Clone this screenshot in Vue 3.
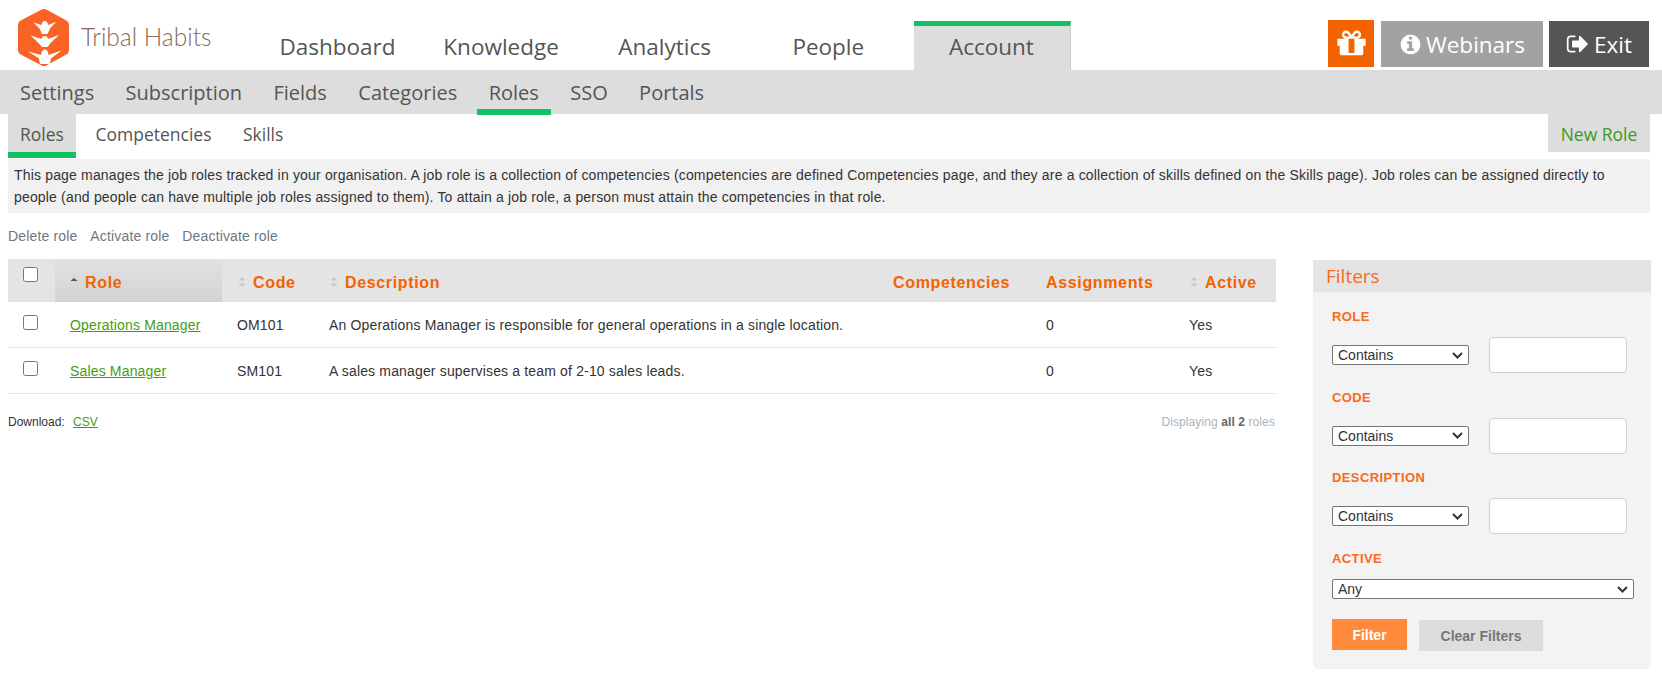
<script setup>
const topTabs = ['Dashboard', 'Knowledge', 'Analytics', 'People', 'Account']
const subTabs = ['Settings', 'Subscription', 'Fields', 'Categories', 'Roles', 'SSO', 'Portals']
const rows = [
  { role: 'Operations Manager', code: 'OM101', desc: 'An Operations Manager is responsible for general operations in a single location.' },
  { role: 'Sales Manager', code: 'SM101', desc: 'A sales manager supervises a team of 2-10 sales leads.' }
]
const filters = ['ROLE', 'CODE', 'DESCRIPTION']
</script>

<template>
  <div class="page">
    <header class="top">
      <div class="logo">
        <svg width="56" height="60" viewBox="0 0 56 60">
          <path d="M27 6 L47 17 L47 42 L27 53 L6 42 L6 17 Z" fill="#f96426" stroke="#f96426" stroke-width="10" stroke-linejoin="round"/>
          <g fill="#fff">
            <path d="M11 43.5 L24 47 Q24.5 41.5 27.7 41.5 Q31 41.5 31.5 47 L44.5 42.5 L34 50.5 L33 56 L23 56 L22 50.5 Z"/>
            <path d="M13.5 27.5 L24.5 31 Q25 28 27.7 28 Q30.5 28 31 31 L42 27 L34 34.5 L30.5 39 L25 39 L21 34.5 Z"/>
            <path d="M16.5 14.5 L24.5 17 Q25 13 27.7 13 Q30.5 13 31 17 L39 14 L33 20.5 L30.5 26 L25 26 L22.5 20.5 Z"/>
          </g>
        </svg>
        <span class="logo-text">Tribal Habits</span>
      </div>
      <nav class="top-nav">
        <a v-for="t in topTabs" :key="t" class="top-tab" :class="{ active: t === 'Account' }">{{ t }}</a>
      </nav>
      <div class="top-btns">
        <a class="gift">
          <svg width="33" height="33" viewBox="0 0 1792 1792"><path fill="#fff" d="M1056 1356v-716h-320v716q0 25 18 38.5t46 13.5h192q28 0 46-13.5t18-38.5zm-456-844h195l-126-161q-26-31-69-31-40 0-68 28t-28 68 28 68 68 28zm688-96q0-40-28-68t-68-28q-43 0-69 31l-125 161h194q40 0 68-28t28-68zm376 256v320q0 14-9 23t-23 9h-96v416q0 40-28 68t-68 28h-1088q-40 0-68-28t-28-68v-416h-96q-14 0-23-9t-9-23v-320q0-14 9-23t23-9h440q-93 0-158.5-65.5t-65.5-158.5 65.5-158.5 158.5-65.5q107 0 168 77l128 165 128-165q61-77 168-77 93 0 158.5 65.5t65.5 158.5-65.5 158.5-158.5 65.5h440q14 0 23 9t9 23z"/></svg>
        </a>
        <a class="btn webinars">
          <svg width="23" height="23" viewBox="0 0 1792 1792"><path fill="#fff" d="M1152 1376v-160q0-14-9-23t-23-9h-96v-512q0-14-9-23t-23-9h-320q-14 0-23 9t-9 23v160q0 14 9 23t23 9h96v320h-96q-14 0-23 9t-9 23v160q0 14 9 23t23 9h448q14 0 23-9t9-23zm-128-896v-160q0-14-9-23t-23-9h-192q-14 0-23 9t-9 23v160q0 14 9 23t23 9h192q14 0 23-9t9-23zm640 416q0 209-103 385.5t-279.5 279.5-385.5 103-385.5-103-279.5-279.5-103-385.5 103-385.5 279.5-279.5 385.5-103 385.5 103 279.5 279.5 103 385.5z"/></svg>
          Webinars
        </a>
        <a class="btn exit">
          <svg width="24" height="24" viewBox="0 0 1792 1792"><path fill="#fff" d="M704 1440q0 4 1 20t.5 26.5-3 23.5-10 19.5-20.5 6.5h-320q-119 0-203.5-84.5t-84.5-203.5v-704q0-119 84.5-203.5t203.5-84.5h320q13 0 22.5 9.5t9.5 22.5q0 4 1 20t.5 26.5-3 23.5-10 19.5-20.5 6.5h-320q-66 0-113 47t-47 113v704q0 66 47 113t113 47h312l11.5 1 11.5 3 8 5.5 7 9 2 13.5zm928-544q0 26-19 45l-544 544q-19 19-45 19t-45-19-19-45v-288h-448q-26 0-45-19t-19-45v-384q0-26 19-45t45-19h448v-288q0-26 19-45t45-19 45 19l544 544q19 19 19 45z"/></svg>
          Exit
        </a>
      </div>
    </header>

    <nav class="sub-nav">
      <a v-for="s in subTabs" :key="s" class="sub-tab" :class="{ on: s === 'Roles' }">{{ s }}</a>
    </nav>

    <div class="third-nav">
      <a class="third on">Roles</a>
      <a class="third">Competencies</a>
      <a class="third">Skills</a>
      <a class="new-role">New Role</a>
    </div>

    <p class="info">This page manages the job roles tracked in your organisation. A job role is a collection of competencies (competencies are defined Competencies page, and they are a collection of skills defined on the Skills page). Job roles can be assigned directly to people (and people can have multiple job roles assigned to them). To attain a job role, a person must attain the competencies in that role.</p>

    <div class="actions">
      <a>Delete role</a><a>Activate role</a><a>Deactivate role</a>
    </div>

    <div class="main">
      <section class="content">
        <table class="grid">
          <colgroup>
            <col class="c1"><col class="c2"><col class="c3"><col class="c4"><col class="c5"><col class="c6"><col>
          </colgroup>
          <thead>
            <tr>
              <th class="chk"><input type="checkbox"></th>
              <th class="sorted"><svg class="sort" width="10" height="14" viewBox="0 0 10 14"><path d="M1.5 6 L5 3 L8.5 6 Z" fill="#555"/></svg>Role</th>
              <th><svg class="sort" width="10" height="14" viewBox="0 0 10 14"><path d="M1.5 5.5 L5 2 L8.5 5.5 Z M1.5 8.5 L5 12 L8.5 8.5 Z" fill="#c8c8c8"/></svg>Code</th>
              <th><svg class="sort" width="10" height="14" viewBox="0 0 10 14"><path d="M1.5 5.5 L5 2 L8.5 5.5 Z M1.5 8.5 L5 12 L8.5 8.5 Z" fill="#c8c8c8"/></svg>Description</th>
              <th class="plain">Competencies</th>
              <th class="plain">Assignments</th>
              <th><svg class="sort" width="10" height="14" viewBox="0 0 10 14"><path d="M1.5 5.5 L5 2 L8.5 5.5 Z M1.5 8.5 L5 12 L8.5 8.5 Z" fill="#c8c8c8"/></svg>Active</th>
            </tr>
          </thead>
          <tbody>
            <tr v-for="r in rows" :key="r.code">
              <td class="chk"><input type="checkbox"></td>
              <td class="role"><a>{{ r.role }}</a></td>
              <td>{{ r.code }}</td>
              <td>{{ r.desc }}</td>
              <td></td>
              <td>0</td>
              <td>Yes</td>
            </tr>
          </tbody>
        </table>
        <div class="foot">
          <span class="dl">Download: <a>CSV</a></span>
          <span class="count">Displaying <b>all 2</b> roles</span>
        </div>
      </section>

      <aside class="filters">
        <h3>Filters</h3>
        <div class="f-body">
          <template v-for="f in filters" :key="f">
            <label class="f-label">{{ f }}</label>
            <div class="f-row">
              <select class="f-sel"><option>Contains</option></select>
              <input class="f-input" type="text">
            </div>
          </template>
          <label class="f-label">ACTIVE</label>
          <select class="f-sel full"><option>Any</option></select>
          <div class="f-btns">
            <button class="b-filter">Filter</button>
            <button class="b-clear">Clear Filters</button>
          </div>
        </div>
      </aside>
    </div>
  </div>
</template>

<style scoped>
.page { font-family: "Liberation Sans", Arial, sans-serif; color: #333; width: 1662px; height: 676px; overflow: hidden; background: #fff; }
a { cursor: pointer; }

.top { display: flex; height: 70px; position: relative; }
.logo { width: 250px; display: flex; padding: 8px 0 0 17px; box-sizing: border-box; }
.logo-text { font-family: Lato, sans-serif; font-weight: 300; font-size: 24.5px; color: #86695c; margin: 15px 0 0 8px; line-height: 28px; height: 28px; white-space: nowrap; }
.top-nav { display: flex; align-items: flex-end; padding-left: 10px; gap: 6.6px; }
.top-tab { width: 157px; font-family: "Open Sans", sans-serif; font-size: 22.5px; color: #555; height: 49px; box-sizing: border-box; border-top: 5px solid transparent; display: flex; align-items: center; justify-content: center; padding: 0 2px 3px 0; }
.top-tab.active { background: #ddd; border-top-color: #12c064; border-right: 1px solid #ccc; }
.top-btns { position: absolute; top: 20px; left: 1328px; display: flex; align-items: flex-start; }
.gift { width: 46px; height: 47px; background: #f56200; display: flex; align-items: center; justify-content: center; }
.btn { margin-top: 1px; height: 46px; font-family: "Open Sans", sans-serif; font-size: 22.5px; color: #fff; display: flex; align-items: center; justify-content: center; gap: 4px; }
.webinars { width: 162px; margin-left: 7px; background: #a2a2a2; }
.exit { width: 100px; margin-left: 6px; background: #555; }

.sub-nav { height: 44px; background: #ddd; display: flex; padding-left: 8px; font-family: "Open Sans", sans-serif; font-size: 20px; color: #555; }
.sub-tab { padding: 0 12px; margin-right: 7.4px; height: 45px; box-sizing: border-box; line-height: 45px; white-space: nowrap; }
.sub-tab.on { border-bottom: 6px solid #12c064; }

.third-nav { height: 44px; display: flex; position: relative; padding-left: 8px; font-family: "Open Sans", sans-serif; font-size: 17.5px; color: #555; }
.third { padding: 0 12px; margin-right: 7.5px; height: 44px; box-sizing: border-box; line-height: 40px; }
.third.on { background: #ddd; border-bottom: 6px solid #12c064; }
.new-role { position: absolute; right: 12px; top: 0; height: 38px; line-height: 40px; width: 102px; text-align: center; background: #ddd; color: #3c9a1e; }

.info { margin: 1px 12px 0 8px; padding: 5px 6px; height: 54px; box-sizing: border-box; background: #f1f1f1; font-size: 14px; letter-spacing: 0.17px; line-height: 22px; color: #333; }

.actions { margin: 13px 0 0 8px; height: 20px; font-size: 14px; letter-spacing: 0.15px; line-height: 20px; color: #6f7780; display: flex; gap: 13px; }

.main { display: flex; margin-top: 13px; padding-left: 8px; align-items: flex-start; }
.content { width: 1268px; }
.grid { width: 100%; border-collapse: collapse; table-layout: fixed; font-size: 14px; letter-spacing: 0.16px; }
.c1 { width: 47px; }
.c2 { width: 167px; }
.c3 { width: 92px; }
.c4 { width: 578px; }
.c5 { width: 153px; }
.c6 { width: 129px; }
.grid th { height: 43px; box-sizing: border-box; background: #e4e4e4; color: #f56200; text-align: left; font-size: 16px; font-weight: 700; padding: 4px 0 0 15px; letter-spacing: 0.65px; white-space: nowrap; }
.grid th.sorted { background: linear-gradient(#e1e1e1, #d2d3d5); padding-left: 14px; }
.grid th.plain { padding-left: 1px; }
.grid th .sort { vertical-align: -1px; margin-right: 6px; }
.grid th.chk, .grid td.chk { padding: 0 0 0 15px; }
.grid th.chk { vertical-align: top; padding-top: 8px; }
.grid td.chk { vertical-align: top; padding-top: 13px; }
input[type="checkbox"] { margin: 0; width: 15px; height: 15px; display: block; }
.grid td { height: 45px; box-sizing: border-box; border-bottom: 1px solid #e4e4e4; padding: 2px 0 0 15px; color: #333; }
.grid tr:nth-child(2) td { height: 46px; }
.grid td:nth-child(5), .grid td:nth-child(6) { padding-left: 1px; }
.role a { color: #3f9f0e; text-decoration: underline; }
.foot { display: flex; justify-content: space-between; align-items: center; margin-top: 19px; padding-right: 1px; height: 18px; }
.dl { font-size: 12px; color: #333; }
.dl a { color: #3f9f0e; text-decoration: underline; margin-left: 5px; }
.count { font-size: 12px; letter-spacing: 0.1px; color: #aab4bc; }
.count b { color: #666; }

.filters { margin-left: 37px; width: 338px; height: 409px; margin-top: 1px; background: #f3f3f3; border-radius: 0 0 5px 5px; box-sizing: border-box; }
.filters h3 { margin: 0; height: 32px; line-height: 32px; padding-left: 13px; background: #e4e4e4; font-family: "Open Sans", sans-serif; font-size: 19px; font-weight: 500; color: #f96a1b; }
.f-body { padding: 17px 0 0 19px; }
.f-label { display: block; font-size: 13px; line-height: 16px; font-weight: 700; color: #f96a1b; letter-spacing: 0.4px; height: 16px; }
.f-row { display: flex; align-items: center; margin: 12px 0 16.5px; gap: 20px; height: 36px; }
.f-sel {
  appearance: none;
  width: 137px; height: 20px; box-sizing: border-box;
  font-family: "Liberation Sans", Arial, sans-serif; font-size: 14px; color: #333;
  border: 1px solid #767676; border-radius: 2px; padding: 0 0 0 5px; display: block;
  background: #fff url("data:image/svg+xml,%3Csvg xmlns='http://www.w3.org/2000/svg' width='11' height='7'%3E%3Cpath d='M1 1 L5.5 5.5 L10 1' fill='none' stroke='%23333' stroke-width='2'/%3E%3C/svg%3E") no-repeat right 5px center;
}
.f-sel.full { width: 302px; margin-top: 12.5px; }
.f-input { width: 138px; height: 36px; box-sizing: border-box; border: 1px solid #ccd0d4; border-radius: 4px; background: #fff; }
.f-btns { display: flex; gap: 12px; margin-top: 20px; align-items: flex-start; }
.f-btns button { font-family: "Liberation Sans", Arial, sans-serif; font-size: 14px; font-weight: 700; border: 0; }
.b-filter { width: 75px; height: 31px; background: #ff8a3c; color: #fff; }
.b-clear { width: 124px; height: 31px; margin-top: 1px; background: #ddd; color: #777; }
</style>
